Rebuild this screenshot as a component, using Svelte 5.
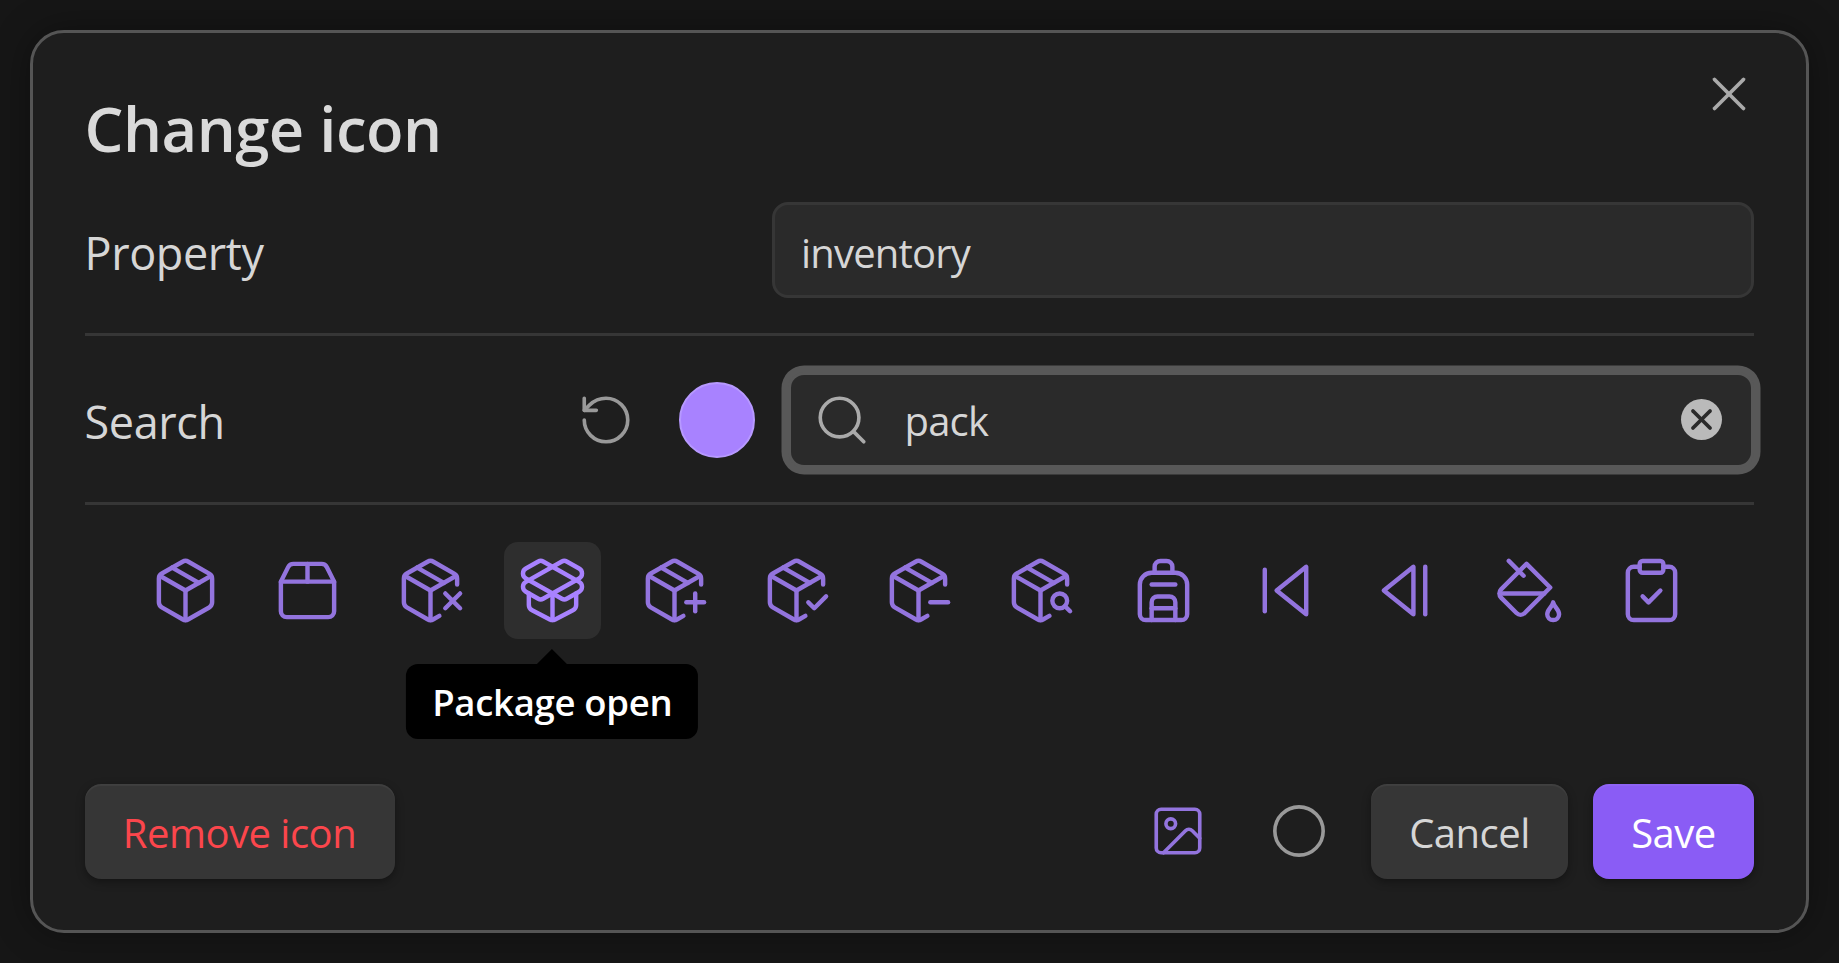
<script>
	const body = `<path d="M21 10V8a2 2 0 0 0-1-1.73l-7-4a2 2 0 0 0-2 0l-7 4A2 2 0 0 0 3 8v8a2 2 0 0 0 1 1.73l7 4a2 2 0 0 0 2 0l2-1.14"/><path d="m7.5 4.27 9 5.15"/><polyline points="3.29 7 12 12 20.71 7"/><line x1="12" x2="12" y1="22" y2="12"/>`;

	const icons = [
		{ name: 'Package', d: `<path d="M11 21.73a2 2 0 0 0 2 0l7-4A2 2 0 0 0 21 16V8a2 2 0 0 0-1-1.73l-7-4a2 2 0 0 0-2 0l-7 4A2 2 0 0 0 3 8v8a2 2 0 0 0 1 1.73z"/><path d="M12 22V12"/><polyline points="3.29 7 12 12 20.71 7"/><path d="m7.5 4.27 9 5.15"/>` },
		{ name: 'Package 2', d: `<path d="M3 9h18v10a2 2 0 0 1-2 2H5a2 2 0 0 1-2-2V9Z"/><path d="m3 9 2.45-4.9A2 2 0 0 1 7.24 3h9.52a2 2 0 0 1 1.8 1.1L21 9"/><path d="M12 3v6"/>` },
		{ name: 'Package x', d: body + `<path d="m17 13 5 5m-5 0 5-5"/>` },
		{ name: 'Package open', hover: true, d: `<path d="M12 22v-9"/><path d="M15.17 2.21a1.67 1.67 0 0 1 1.63 0L21 4.57a1.93 1.93 0 0 1 0 3.36L8.82 14.79a1.655 1.655 0 0 1-1.64 0L3 12.43a1.93 1.93 0 0 1 0-3.36z"/><path d="M20 13v3.87a2.06 2.06 0 0 1-1.11 1.83l-6 3.08a1.93 1.93 0 0 1-1.78 0l-6-3.08A2.06 2.06 0 0 1 4 16.87V13"/><path d="M21 12.43a1.93 1.93 0 0 0 0-3.36L8.83 2.2a1.64 1.64 0 0 0-1.63 0L3 4.57a1.93 1.93 0 0 0 0 3.36l12.18 6.86a1.636 1.636 0 0 0 1.63 0z"/>` },
		{ name: 'Package plus', d: body + `<path d="M16 16h6"/><path d="M19 13v6"/>` },
		{ name: 'Package check', d: body + `<path d="m16 16 2 2 4-4"/>` },
		{ name: 'Package minus', d: body + `<path d="M16 16h6"/>` },
		{ name: 'Package search', d: body + `<path d="M20.27 17.27 22 19"/><circle cx="18.5" cy="15.5" r="2.5"/>` },
		{ name: 'Backpack', d: `<path d="M4 10a4 4 0 0 1 4-4h8a4 4 0 0 1 4 4v10a2 2 0 0 1-2 2H6a2 2 0 0 1-2-2z"/><path d="M8 10h8"/><path d="M8 18h8"/><path d="M8 22v-6a2 2 0 0 1 2-2h4a2 2 0 0 1 2 2v6"/><path d="M9 6V4a2 2 0 0 1 2-2h2a2 2 0 0 1 2 2v2"/>` },
		{ name: 'Skip back', d: `<polygon points="19 20 9 12 19 4 19 20"/><line x1="5" x2="5" y1="19" y2="5"/>` },
		{ name: 'Step back', d: `<line x1="18" x2="18" y1="20" y2="4"/><polygon points="14,20 4,12 14,4"/>` },
		{ name: 'Paint bucket', d: `<path d="m19 11-8-8-8.6 8.6a2 2 0 0 0 0 2.8l5.2 5.2c.8.8 2 .8 2.8 0L19 11Z"/><path d="m5 2 5 5"/><path d="M2 13h15"/><path d="M22 20a2 2 0 1 1-4 0c0-1.6 1.7-2.4 2-4 .3 1.6 2 2.4 2 4Z"/>` },
		{ name: 'Clipboard check', d: `<rect width="8" height="4" x="8" y="2" rx="1" ry="1"/><path d="M16 4h2a2 2 0 0 1 2 2v14a2 2 0 0 1-2 2H6a2 2 0 0 1-2-2V6a2 2 0 0 1 2-2h2"/><path d="m9 14 2 2 4-4"/>` }
	];
</script>

<div class="page">
	<div class="modal">
		<button class="close" aria-label="Close" type="button">
			<svg class="icon" viewBox="0 0 24 24"><path d="M18 6 6 18"/><path d="m6 6 12 12"/></svg>
		</button>

		<h2 class="title">Change icon</h2>

		<div class="row">
			<span class="label">Property</span>
			<div class="field field-name"><span>inventory</span></div>
		</div>

		<div class="row">
			<span class="label">Search</span>
			<svg class="icon reset" viewBox="0 0 24 24"><path d="M3 12a9 9 0 1 0 9-9 9.75 9.75 0 0 0-6.74 2.74L3 8"/><path d="M3 3v5h5"/></svg>
			<span class="swatch"></span>
			<div class="field field-search">
				<svg class="icon search" viewBox="0 0 24 24"><circle cx="11" cy="11" r="8"/><path d="m21 21-4.3-4.3"/></svg>
				<span class="query">pack</span>
				<span class="clear">
					<svg viewBox="0 0 24 24"><path d="M17 7 7 17"/><path d="m7 7 10 10"/></svg>
				</span>
			</div>
		</div>

		<div class="results">
			{#each icons as item}
				<div class="cell" class:hover={item.hover}>
					<svg class="icon" viewBox="0 0 24 24">{@html item.d}</svg>
					{#if item.hover}
						<div class="tooltip">{item.name}</div>
					{/if}
				</div>
			{/each}
		</div>

		<div class="buttons">
			<button class="btn remove" type="button">Remove icon</button>
			<svg class="icon picture" viewBox="0 0 24 24"><rect width="18" height="18" x="3" y="3" rx="2" ry="2"/><circle cx="9" cy="9" r="2"/><path d="m21 15-3.086-3.086a2 2 0 0 0-2.828 0L6 21"/></svg>
			<svg class="icon ring" viewBox="0 0 24 24"><circle cx="12" cy="12" r="10"/></svg>
			<button class="btn cancel" type="button">Cancel</button>
			<button class="btn save" type="button">Save</button>
		</div>
	</div>
</div>

<style>
	:global(body) {
		background: #161616;
		font-family: 'Open Sans', 'Noto Sans', sans-serif;
	}

	.page {
		height: 963px;
		box-sizing: border-box;
		padding: 30px;
		overflow: hidden;
	}

	.modal {
		position: relative;
		box-sizing: border-box;
		height: 903px;
		padding: 62px 52px 0 51.5px;
		background: #1e1e1e;
		border: 3px solid #555;
		border-radius: 34px;
		box-shadow: 0 0 36px rgba(0, 0, 0, 0.35);
		color: #dadada;
	}

	.icon {
		display: block;
		width: 58px;
		height: 58px;
		fill: none;
		stroke: currentColor;
		stroke-width: 1.5;
		stroke-linecap: round;
		stroke-linejoin: round;
		flex-shrink: 0;
	}

	.close {
		position: absolute;
		top: 31.5px;
		right: 48.5px;
		padding: 0;
		background: none;
		border: none;
		color: #aaa;
	}

	.title {
		margin: 0 0 40px;
		font-size: 61.5px;
		font-weight: 600;
		line-height: 67px;
		letter-spacing: -0.5px;
	}

	.row {
		display: flex;
		align-items: center;
		padding: 36px 0 34.5px;
		border-bottom: 3px solid #363636;
	}

	.row:first-of-type {
		padding-top: 0;
	}

	.label {
		flex: 1;
		padding-top: 4px;
		font-size: 45px;
		letter-spacing: -0.4px;
		color: #d6d6d6;
	}

	.field {
		display: flex;
		align-items: center;
		box-sizing: border-box;
		height: 96px;
		background: #2a2a2a;
		border: 3px solid #363636;
		border-radius: 16px;
		font-size: 40px;
		letter-spacing: -0.8px;
		color: #d6d6d6;
	}

	.field-name {
		width: 982px;
		padding: 4px 0 0 26px;
	}

	.field-search {
		width: 966.5px;
		padding: 0 29px 0 22px;
		border-color: #585858;
		box-shadow: 0 0 0 6.5px #585858;
	}

	.reset {
		margin-right: 44px;
		color: #999;
	}

	.swatch {
		width: 76px;
		height: 76px;
		box-sizing: border-box;
		margin-right: 33px;
		background: #a882ff;
		border: 2.4px solid #b799ff;
		border-radius: 50%;
	}

	.search {
		margin-right: 34px;
		color: #aaa;
	}

	.query {
		flex: 1;
		padding-top: 2px;
	}

	.clear {
		display: flex;
		width: 41px;
		height: 41px;
		background: #bababa;
		border-radius: 50%;
	}

	.clear svg {
		fill: none;
		stroke: #2a2a2a;
		stroke-width: 2.2;
		stroke-linecap: round;
	}

	.results {
		display: flex;
		justify-content: center;
		gap: 25.16px;
		margin-top: 36.5px;
		padding-right: 1px;
	}

	.cell {
		position: relative;
		display: flex;
		align-items: center;
		justify-content: center;
		width: 97px;
		height: 97px;
		border-radius: 14px;
		color: #9374de;
	}

	.cell .icon {
		width: 71px;
		height: 71px;
	}

	.cell.hover {
		background: #2e2e2e;
		color: #a882ff;
	}

	.tooltip {
		position: absolute;
		top: 122px;
		left: 50%;
		transform: translateX(-50%);
		padding: 13px 26px 11px;
		background: #000;
		border-radius: 12px;
		color: #fff;
		font-size: 36.5px;
		font-weight: 600;
		line-height: 51px;
		white-space: nowrap;
		letter-spacing: -0.3px;
	}

	.tooltip::before {
		content: '';
		position: absolute;
		top: -15px;
		left: 50%;
		margin-left: -15px;
		border-left: 15px solid transparent;
		border-right: 15px solid transparent;
		border-bottom: 15px solid #000;
	}

	.buttons {
		display: flex;
		align-items: center;
		margin-top: 145px;
	}

	.btn {
		height: 95px;
		padding: 2px 0 0;
		border: none;
		border-radius: 16px;
		font-family: inherit;
		font-size: 40px;
		letter-spacing: -0.5px;
		box-shadow: inset 0 2px 1px rgba(255, 255, 255, 0.05), 0 3px 8px rgba(0, 0, 0, 0.35);
	}

	.remove {
		width: 310px;
		margin-right: auto;
		background: #363636;
		color: #fb464c;
	}

	.picture {
		color: #9374de;
		margin-right: 62.5px;
	}

	.ring {
		color: #999;
		margin-right: 43.5px;
	}

	.cancel {
		width: 197px;
		margin-right: 25px;
		background: #363636;
		color: #d6d6d6;
	}

	.save {
		width: 161px;
		background: #8a5cf5;
		color: #fff;
	}
</style>
